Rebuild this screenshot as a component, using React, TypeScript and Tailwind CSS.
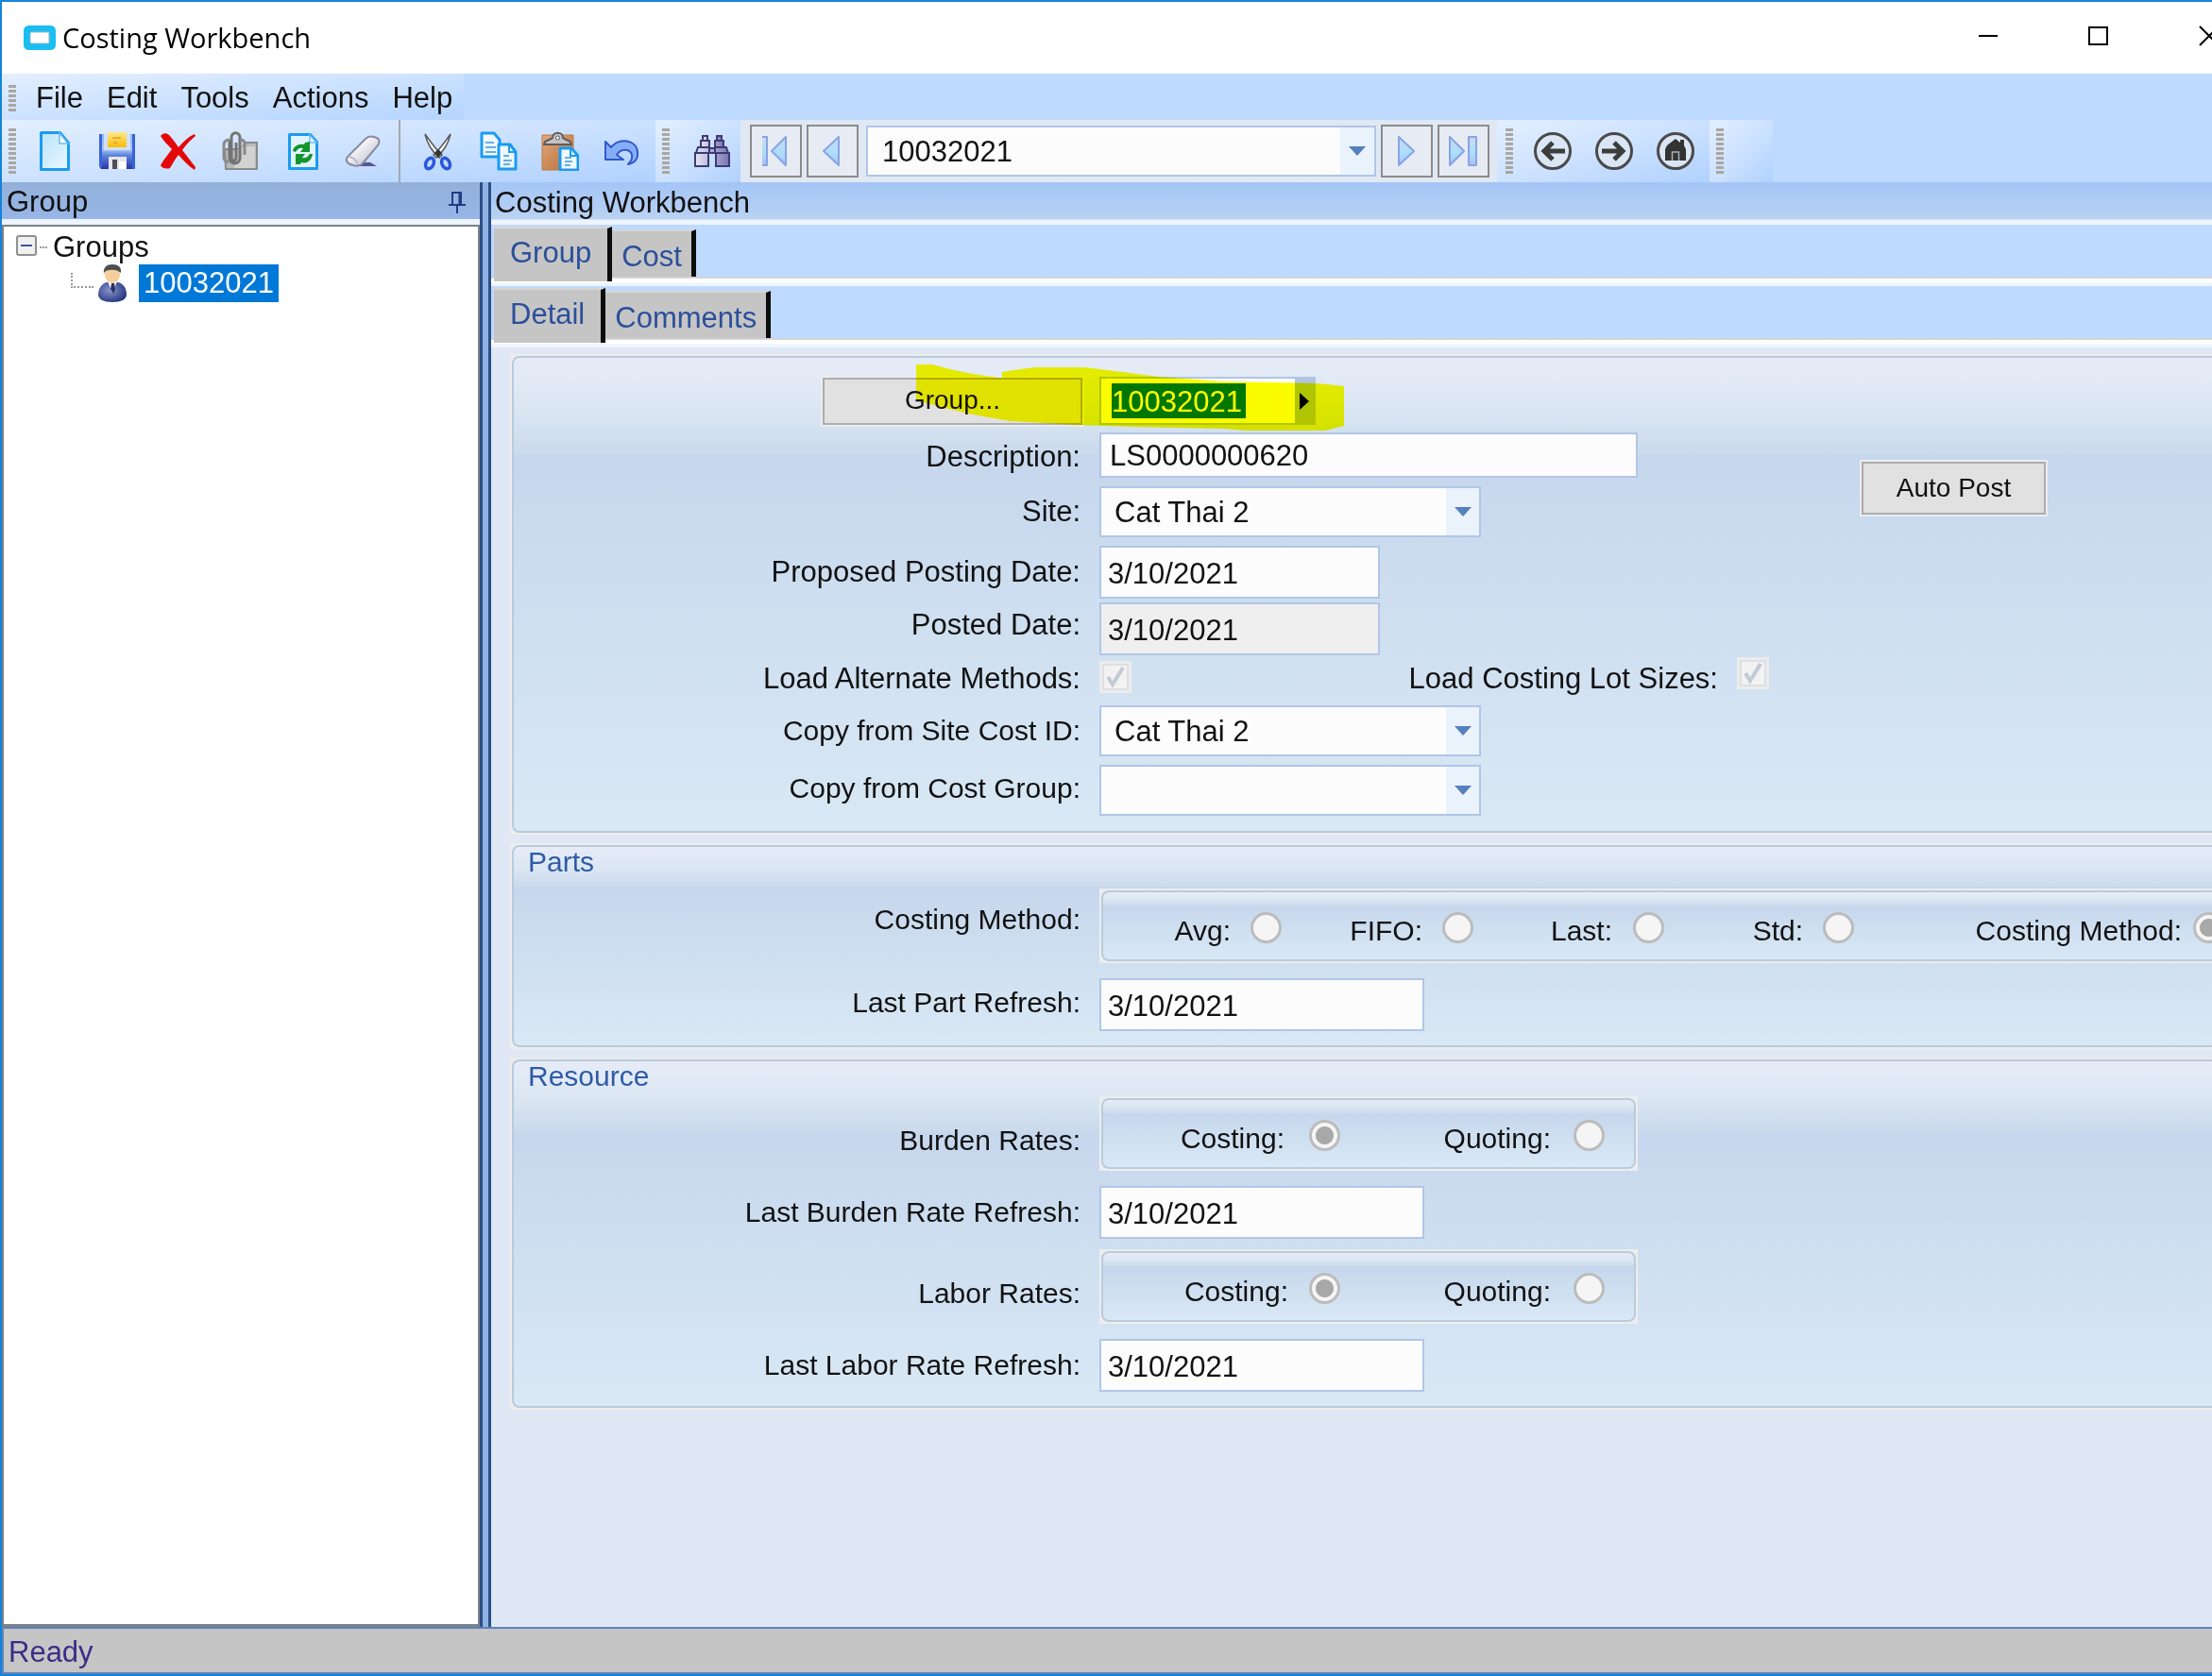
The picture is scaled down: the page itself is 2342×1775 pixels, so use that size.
import type { ReactNode } from "react";

const boxFill =
  "bg-[linear-gradient(#e6ecf7,#dce7f3_10%,#cbdaec_20%,#c6d7ee_21%,#c8d9ee_28%,#cddef0_50%,#d4e4f3_80%,#d8e8f4)]";

function Grip({ short }: { short?: boolean }) {
  return (
    <div
      className={`w-2 shrink-0 bg-[repeating-linear-gradient(#aaa6a2_0px,#aaa6a2_3px,transparent_3px,transparent_5px)] ${
        short ? "h-7" : "h-12"
      }`}
    />
  );
}

function ToolButton({ label, children }: { label: string; children: ReactNode }) {
  return (
    <button type="button" aria-label={label} className="flex h-full w-[65px] items-center justify-center">
      <svg width="40" height="42" viewBox="0 0 40 42" fill="none">
        {children}
      </svg>
    </button>
  );
}

function Toolbar({ children }: { children: ReactNode }) {
  return (
    <div className="flex h-full shrink-0 items-center bg-linear-to-br from-[#e3efff] via-[#cde2ff] to-[#b0d1ff]">
      {children}
    </div>
  );
}

function StepButton({ label, children }: { label: string; children: ReactNode }) {
  return (
    <button
      type="button"
      aria-label={label}
      className="flex h-[56px] w-[55px] items-center justify-center border-2 border-[#8b8b8b] bg-[#e7ebf3]"
    >
      <svg width="32" height="32" viewBox="0 0 32 32" fill="url(#step)" stroke="#86a5e6" strokeWidth="2" strokeLinejoin="round">
        {children}
      </svg>
    </button>
  );
}

function RoundButton({ label, children }: { label: string; children: ReactNode }) {
  return (
    <button type="button" aria-label={label} className="flex h-full w-[65px] items-center justify-center">
      <svg width="42" height="42" viewBox="0 0 42 42" fill="none">
        <circle cx="21" cy="21" r="18.5" fill="#dbe6f5" stroke="#4a4a4a" strokeWidth="3" />
        {children}
      </svg>
    </button>
  );
}

function DropArrow({ className }: { className: string }) {
  return (
    <span className={`pointer-events-none absolute inset-y-[2px] right-[2px] flex items-center justify-center bg-[#eaf2fc] ${className}`}>
      <svg width="18" height="12" viewBox="0 0 18 12">
        <path d="M0 1h18L9 11z" fill="#5580bd" />
      </svg>
    </span>
  );
}

function Select({ id, value }: { id: string; value: string }) {
  return (
    <div className="relative h-[54px] w-[404px] text-[31px]">
      <select
        id={id}
        defaultValue={value}
        className="h-full w-full appearance-none border-2 border-[#b0c6e6] bg-[#fcfcfc] pt-[2px] pl-[14px]"
      >
        <option value={value}>{value}</option>
      </select>
      <DropArrow className="w-[35px]" />
    </div>
  );
}

function DateBox({ id, size, readOnly }: { id: string; size: string; readOnly?: boolean }) {
  return (
    <input
      id={id}
      type="text"
      defaultValue="3/10/2021"
      readOnly={readOnly}
      className={`h-14 border-2 border-[#b0c6e6] pt-1 pl-[7px] text-[31px] ${size} ${readOnly ? "bg-[#efefef]" : "bg-[#fcfcfc]"}`}
    />
  );
}

function Row({
  label,
  htmlFor,
  gap,
  labelStyle = "",
  children,
}: {
  label: string;
  htmlFor?: string;
  gap: string;
  labelStyle?: string;
  children: ReactNode;
}) {
  return (
    <div className={`flex items-center gap-[20px] ${gap}`}>
      <label htmlFor={htmlFor} className={`w-[600px] shrink-0 text-right leading-8 whitespace-nowrap ${labelStyle}`}>
        {label}
      </label>
      {children}
    </div>
  );
}

function Check({ id }: { id: string }) {
  return (
    <span className="relative flex size-[34px] shrink-0 items-center justify-center bg-[#ececec]">
      <input id={id} type="checkbox" defaultChecked disabled className="size-7 appearance-none border-2 border-[#dcdfe3] bg-[#f2f2f2]" />
      <svg className="pointer-events-none absolute" width="22" height="24" viewBox="0 0 22 24" fill="none">
        <path d="M3 12l5 8L19 2" stroke="#c3c9d6" strokeWidth="4" />
      </svg>
    </span>
  );
}

function Radio({
  id,
  name,
  label,
  cell,
  gap = "gap-[21px]",
  checked,
}: {
  id: string;
  name: string;
  label: string;
  cell: string;
  gap?: string;
  checked?: boolean;
}) {
  return (
    <div className={`flex shrink-0 items-center justify-end pt-1 ${gap} ${cell}`}>
      <label htmlFor={id} className="pt-[6px] leading-8 whitespace-nowrap">
        {label}
      </label>
      <input
        id={id}
        name={name}
        type="radio"
        disabled
        defaultChecked={checked}
        className="size-[33px] shrink-0 appearance-none rounded-full border-[3px] border-[#bcbcbc] bg-[#f5f5f5] checked:bg-[radial-gradient(circle,#a8a8a8_0px,#a8a8a8_9px,#f5f5f5_10px)]"
      />
    </div>
  );
}

function RadioBox({ open, children }: { open?: boolean; children: ReactNode }) {
  return (
    <div className={`h-[79px] bg-[#ededed] py-[2px] pl-[2px] ${open ? "min-w-0 flex-1 overflow-hidden" : "w-[570px] pr-[2px]"}`}>
      <div role="radiogroup" className={`flex h-full items-center border-2 border-[#b9cbdc] ${boxFill} ${open ? "rounded-l-lg border-r-0" : "rounded-lg"}`}>
        {children}
      </div>
    </div>
  );
}

function GroupBox({ title, children }: { title?: string; children: ReactNode }) {
  return (
    <section className="bg-[#ededed] py-[2px] pl-[2px] text-[30px]">
      <div className={`rounded-l-lg border-2 border-r-0 border-[#b9cbdc] pb-[15px] ${boxFill}`}>
        {title && <h2 className="pb-[2px] pl-[15px] leading-8 text-[#2f5ba6]">{title}</h2>}
        {children}
      </div>
    </section>
  );
}

function Tab({ active, children }: { active?: boolean; children: ReactNode }) {
  return (
    <button
      type="button"
      role="tab"
      aria-selected={!!active}
      className={`border-t-2 border-r-[5px] border-t-[#d6d6d6] border-r-[#0c0c0c] bg-[#c5c5c5] leading-8 text-[#2b4f9b] ${
        active ? "h-[58px] pr-[17px] pb-1 pl-[17px]" : "mb-[5px] h-[50px] pt-[6px] pr-[10px] pl-[10px]"
      }`}
    >
      {children}
    </button>
  );
}

function TabStrip({ children }: { children: ReactNode }) {
  return (
    <div
      role="tablist"
      className="flex h-[65px] shrink-0 items-end bg-[linear-gradient(#bedaff_0px,#bedaff_55px,#cfcfcf_55px,#dcdcdc_57px,#ffffff_57px,#ffffff_61px,#edf4fe_62px)] pb-[5px] pl-[3px]"
    >
      {children}
    </div>
  );
}

export default function App() {
  return (
    <div className="flex h-screen flex-col overflow-hidden border-y-2 border-l-2 border-[#1583d9] bg-[#bedaff] font-['Liberation_Sans',Arial,sans-serif] text-[31px] text-[#111]">
      <svg width="0" height="0" className="absolute">
        <defs>
          <linearGradient id="step" x1="0" y1="0" x2="0" y2="1">
            <stop offset="0" stopColor="#cfd9f2" />
            <stop offset="0.6" stopColor="#a9defa" />
            <stop offset="1" stopColor="#b2b9f3" />
          </linearGradient>
          <linearGradient id="sheet" x1="0" y1="0" x2="1" y2="1">
            <stop offset="0" stopColor="#b9e3fb" />
            <stop offset="1" stopColor="#eaf8ff" />
          </linearGradient>
          <linearGradient id="lens" x1="0" y1="0" x2="1" y2="0">
            <stop offset="0" stopColor="#e8e8f6" />
            <stop offset="1" stopColor="#7775ae" />
          </linearGradient>
          <linearGradient id="disk" x1="0" y1="0" x2="0" y2="1">
            <stop offset="0" stopColor="#8fb4f8" />
            <stop offset="0.45" stopColor="#a9c4fa" />
            <stop offset="0.6" stopColor="#5f86dd" />
            <stop offset="1" stopColor="#2a35a8" />
          </linearGradient>
          <linearGradient id="note" x1="0" y1="0" x2="0" y2="1">
            <stop offset="0" stopColor="#fde98a" />
            <stop offset="1" stopColor="#fbbc05" />
          </linearGradient>
          <linearGradient id="wood" x1="0" y1="0" x2="1" y2="1">
            <stop offset="0" stopColor="#e2a878" />
            <stop offset="1" stopColor="#b6703c" />
          </linearGradient>
          <linearGradient id="rubber" x1="0" y1="0" x2="1" y2="1">
            <stop offset="0.3" stopColor="#fbfbfd" />
            <stop offset="1" stopColor="#b4b4c6" />
          </linearGradient>
          <radialGradient id="suit" cx="0.4" cy="0.4" r="0.7">
            <stop offset="0" stopColor="#8795cf" />
            <stop offset="1" stopColor="#1f2f78" />
          </radialGradient>
        </defs>
      </svg>

      <header className="flex h-[76px] shrink-0 items-center bg-white">
        <svg className="ml-[23px] shrink-0" width="34" height="26" viewBox="0 0 34 26" fill="none">
          <rect x="3.5" y="3.5" width="27" height="19" rx="2" stroke="#19bdf0" strokeWidth="7" />
          <rect x="7" y="7" width="20" height="12" rx="1" stroke="#8fb5c4" strokeWidth="1" />
        </svg>
        <h1 className="ml-[7px] font-['Open_Sans','Noto_Sans',sans-serif] text-[29px] text-black">Costing Workbench</h1>
        <div className="-mr-2 ml-auto flex shrink-0 gap-[95px] pb-1">
          <button type="button" aria-label="Minimize">
            <svg width="22" height="22" viewBox="0 0 22 22"><path d="M1 11h20" stroke="#000" strokeWidth="2" /></svg>
          </button>
          <button type="button" aria-label="Maximize">
            <svg width="22" height="22" viewBox="0 0 22 22"><path d="M1 2h19v18H1z" fill="none" stroke="#000" strokeWidth="2" /></svg>
          </button>
          <button type="button" aria-label="Close">
            <svg width="22" height="22" viewBox="0 0 22 22"><path d="M1 1l20 20M21 1L1 21" stroke="#000" strokeWidth="2" /></svg>
          </button>
        </div>
      </header>

      <nav className="flex h-[49px] shrink-0">
        <div className="flex items-center gap-[25px] bg-linear-to-br from-[#e3efff] to-[#b4d4ff] pt-[2px] pr-[12px] pl-[7px] leading-8">
          <div className="flex items-center gap-[21px]">
            <Grip short />
            <button type="button">File</button>
          </div>
          <button type="button">Edit</button>
          <button type="button">Tools</button>
          <button type="button">Actions</button>
          <button type="button">Help</button>
        </div>
      </nav>

      <div className="flex h-[66px] shrink-0">
        <Toolbar>
          <div className="mr-[9px] ml-[7px]"><Grip /></div>
          <ToolButton label="New">
            <path d="M4.500 1.500h20l9 11v28h-29z" fill="url(#sheet)" stroke="#1b9bf0" strokeWidth="3" strokeLinejoin="round" />
            <path d="M24 2v11h9z" fill="#fff" stroke="#6cbcf3" strokeWidth="1.500" />
          </ToolButton>
          <ToolButton label="Save">
            <path d="M1 3h38v37H3l-2-3z" fill="url(#disk)" />
            <path d="M1 3h3v35H1zM36 3h3v37h-3z" fill="#3565d8" />
            <path d="M6 3h28v17H6z" fill="#cfe0fc" />
            <path d="M10 1h20v16H10z" fill="url(#note)" />
            <path d="M15 7h9M16 12h4" stroke="#e39a2c" strokeWidth="1.500" />
            <path d="M11 27h19v13H11z" fill="#e4e6ec" />
            <path d="M15 30h5v10h-5z" fill="#4f4f5c" />
            <path d="M22 32h7v8h-7z" fill="#fff" />
          </ToolButton>
          <ToolButton label="Delete">
            <path d="M1 5c2-3 6-4 9-1 4 4 7 9 10 13 5-6 10-11 17-14l1 2c-5 4-10 9-14 15 5 6 10 13 14 18l-1 3c-6-4-12-10-17-16-4 5-6 9-9 14-3 1-8 1-10-3 3-6 8-11 12-17C9 15 4 10 1 5z" fill="#e40808" />
          </ToolButton>
          <ToolButton label="Attachment">
            <path d="M4 19h18l3-7h13v28H5z" fill="#b9b9b9" stroke="#8b8b8b" strokeWidth="2" />
            <path d="M14 21l10-5h12v23H14z" fill="#d2d2d2" />
            <path d="M9 9v19c0 8 11 8 11 0V7c0-7-9-7-9 0v21c0 4 5 4 5 0V12" stroke="#737373" strokeWidth="3" />
            <path d="M9 9C4 9 3 12 3 15v13c0 3 2 4 5 5M20 9c4 0 5 2 5 4v12" stroke="#8a8a8a" strokeWidth="3" />
          </ToolButton>
          <ToolButton label="Refresh">
            <path d="M7.500 3.500h22l7 8v28h-29z" fill="#e2f3fd" stroke="#1b9bf0" strokeWidth="3" strokeLinejoin="round" />
            <path d="M29 4v8h7z" fill="#fff" stroke="#6cbcf3" strokeWidth="1.500" />
            <path d="M11 21c1-6 7-8 12-7l1-2 5-1v11h-10l3-4c-4-1-6 1-8 4z" fill="#12962b" />
            <path d="M32 24c-1 6-5 11-12 9l-1 2h-5V24h10l-3 4c4 1 6-1 8-4z" fill="#12962b" />
          </ToolButton>
          <ToolButton label="Clear">
            <path d="M12 37h23l-7-4H16z" fill="#55559a" />
            <path d="M4 27L23 8c3-3 6-3 9-2 5 1 7 4 4 9L20 34c-3 3-7 3-10 2-6-1-9-5-6-9z" fill="url(#rubber)" stroke="#8a8aa2" strokeWidth="2" />
            <path d="M5 27c3 0 8 2 10 8" stroke="#b9b9ca" strokeWidth="2" />
          </ToolButton>
          <div className="mx-[6px] h-full w-[2px] bg-[#a3a8b0]" />
          <ToolButton label="Cut">
            <path d="M7 3c2 9 7 18 15 25l3-3C18 19 12 10 7 3zM34 3c-2 9-7 18-15 25l-3-3C23 19 29 10 34 3z" fill="#fbfbfb" stroke="#5a5a5a" strokeWidth="1.500" />
            <path d="M17 23l4-4 4 4-4 5z" fill="#333" />
            <ellipse cx="12" cy="34" rx="4" ry="6" transform="rotate(25 12 34)" stroke="#2a58dc" strokeWidth="3.500" />
            <ellipse cx="29" cy="34" rx="4" ry="6" transform="rotate(-25 29 34)" stroke="#2a58dc" strokeWidth="3.500" />
          </ToolButton>
          <ToolButton label="Copy">
            <path d="M2 2h13l6 7v18H2z" fill="#eef8fe" stroke="#1b9bf0" strokeWidth="3" strokeLinejoin="round" />
            <path d="M6 12h9M6 17h11M6 22h11" stroke="#68aee2" strokeWidth="2" />
            <path d="M20 14h12l6 8v18H20z" fill="#eef8fe" stroke="#1b9bf0" strokeWidth="3" strokeLinejoin="round" />
            <path d="M31 15v7h7" stroke="#1b9bf0" strokeWidth="2" />
            <path d="M25 26h6M25 31h9M25 35h7" stroke="#68aee2" strokeWidth="2" />
          </ToolButton>
          <ToolButton label="Paste">
            <path d="M1 4h33v37H1z" fill="url(#wood)" stroke="#bf7a44" strokeWidth="1" />
            <path d="M3 14c0-5 6-4 9-7 0-7 11-7 11 0 3 3 9 2 9 7z" fill="#c4c4c4" stroke="#5c5c5c" strokeWidth="2" />
            <circle cx="17.500" cy="7" r="2" fill="#fff" stroke="#555" />
            <path d="M20 18h12l7 8v15H20z" fill="#eef8fe" stroke="#1b9bf0" strokeWidth="3" strokeLinejoin="round" />
            <path d="M31 19v7h7" stroke="#1b9bf0" strokeWidth="2" />
            <path d="M25 28h7M25 32h8M25 36h6" stroke="#68aee2" strokeWidth="2" />
          </ToolButton>
          <ToolButton label="Undo">
            <path d="M3 11v19h19l-7-5c4-7 14-7 16 0 1 4-1 7-4 10 7-1 11-6 10-13C36 9 18 6 9 17z" fill="#86aef6" stroke="#3357cc" strokeWidth="2" strokeLinejoin="round" />
          </ToolButton>
          <div className="w-1" />
        </Toolbar>

        <Toolbar>
          <div className="ml-[7px]"><Grip /></div>
          <button type="button" aria-label="Search" className="flex h-full w-[75px] items-center justify-center pl-[14px]">
            <svg width="40" height="36" viewBox="0 0 40 36" fill="url(#lens)" stroke="#3c3a74" strokeWidth="2">
              <path d="M10 2h5v5h-5zM25 2h5v5h-5zM8 7h9v7H8zM23 7h9v7h-9z" />
              <path d="M5 14h12v6H3zM23 14h12l2 6H23zM17 15h6v5h-6zM2 20h14v14H2zM24 20h14v14H24z" />
            </svg>
          </button>
        </Toolbar>

        <div className="flex h-full items-center gap-[5px] bg-[#e0e8f4] pr-2 pl-[10px]">
          <StepButton label="First record">
            <path d="M1 1h5v30H1M26 1v30L11 16z" />
          </StepButton>
          <StepButton label="Previous record">
            <path d="M22 1v30L6 16z" />
          </StepButton>
          <div className="relative ml-[3px] h-[54px] w-[540px]">
            <select
              aria-label="Record"
              defaultValue="10032021"
              className="h-full w-full appearance-none border-2 border-[#b0c6e6] bg-[#fcfcfc] pt-[2px] pl-[15px]"
            >
              <option>10032021</option>
            </select>
            <DropArrow className="w-[36px]" />
          </div>
          <StepButton label="Next record">
            <path d="M7 1v30l16-15z" />
          </StepButton>
          <StepButton label="Last record">
            <path d="M1 1v30l15-15zM21 1h8v30h-8z" />
          </StepButton>
        </div>

        <Toolbar>
          <div className="mr-[9px] ml-[9px]"><Grip /></div>
          <RoundButton label="Back">
            <path d="M34 21H12M21 12l-9 9 9 9" stroke="#3d3d3d" strokeWidth="5" />
          </RoundButton>
          <RoundButton label="Forward">
            <path d="M8 21h22M21 12l9 9-9 9" stroke="#3d3d3d" strokeWidth="5" />
          </RoundButton>
          <RoundButton label="Home">
            <path d="M21 8l5 4V9h4v6l2 4v12H10V19l2-4z" fill="#333" />
            <path d="M17.500 31v-9h7v9" stroke="#a9b1bd" strokeWidth="1.500" />
          </RoundButton>
          <div className="w-1" />
        </Toolbar>
        <Toolbar>
          <div className="mr-[52px] ml-[7px]"><Grip /></div>
        </Toolbar>
      </div>

      <div className="flex min-h-0 flex-1">
        <aside className="flex w-[506px] shrink-0 flex-col bg-[#edf4fe]">
          <div className="flex h-[39px] shrink-0 items-center justify-between bg-linear-to-b from-[#92b0d9] to-[#97b6e8] pt-[2px] pr-[15px] pl-[5px]">
            <h2 className="leading-8">Group</h2>
            <button type="button" aria-label="Pin panel">
              <svg width="18" height="24" viewBox="0 0 18 24" fill="none" stroke="#1e3f86" strokeWidth="2">
                <path d="M4 14V2h9v12M0 15h18M9 15v9" />
                <path d="M12 2v12" strokeWidth="3" />
              </svg>
            </button>
          </div>
          <div className="mt-[6px] flex-1 border-t-2 border-r-2 border-b-[3px] border-l-2 border-[#7c8188] bg-white pt-1">
            <div className="flex h-[36px] items-center pl-[13px]">
              <button type="button" aria-label="Collapse Groups" className="-mt-1">
                <svg width="22" height="22" viewBox="0 0 22 22">
                  <rect x="1" y="1" width="20" height="20" rx="2" fill="#f0f0f0" stroke="#8f8f8f" strokeWidth="2" />
                  <path d="M5 11h12" stroke="#44549c" strokeWidth="2" />
                </svg>
              </button>
              <span className="ml-[3px] w-2 border-t-2 border-dotted border-[#9a9a9a]" />
              <span className="pl-[6px] leading-8">Groups</span>
            </div>
            <div className="flex h-10 items-center pl-[71px]">
              <span className="mb-[6px] h-4 w-6 border-b-2 border-l-2 border-dotted border-[#9a9a9a]" />
              <svg className="ml-[4px]" width="32" height="42" viewBox="0 0 32 42">
                <path d="M1 33c0-8 5-12 9-13h12c5 1 9 6 9 13 0 5-6 8-15 8S1 38 1 33z" fill="url(#suit)" />
                <path d="M11 19l5 12 5-12z" fill="#fff" />
                <path d="M15 21h3l1 6-2 5-3-5z" fill="#28305e" />
                <ellipse cx="16" cy="12" rx="8" ry="9" fill="#f2cf9d" />
                <path d="M7 11C6 4 10 1 16 1s10 3 9 9c-3-3-8-4-11-3-4 0-6 1-7 4z" fill="#4e4e4e" />
              </svg>
              <span className="ml-[12px] bg-[#0078d7] px-[5px] pt-1 pb-1 leading-8 text-white">10032021</span>
            </div>
          </div>
        </aside>
        <div className="w-[12px] shrink-0 border-x-[3px] border-[#2b4f86] bg-[#8fb1e4]" />

        <main className="flex min-w-0 flex-1 flex-col bg-[#dfe8f4]">
          <div className="flex h-[45px] shrink-0 items-start bg-[linear-gradient(#a4c5f6_0px,#b9d2f3_39px,#edf4fe_40px)] pt-[6px] pl-[4px]">
            <h2 className="leading-8">Costing Workbench</h2>
          </div>
          <TabStrip>
            <Tab active>Group</Tab>
            <Tab>Cost</Tab>
          </TabStrip>
          <TabStrip>
            <Tab active>Detail</Tab>
            <Tab>Comments</Tab>
          </TabStrip>

          <form className="mt-[7px] flex flex-col gap-[9px] pl-[20px]">
            <GroupBox>
              <div className="relative flex items-start text-[31px]">
                <div className="w-[1329px] shrink-0 pb-[1px]">
                  <div className="mt-5 flex items-center gap-[18px]">
                    <div className="w-[602px] shrink-0 text-right">
                      <button
                        type="button"
                        className="h-[50px] w-[275px] border-2 border-[#adadad] bg-[#e1e1e1] pb-[2px] text-[28px] leading-8 outline-2 outline-[#eaecef]"
                      >
                        Group...
                      </button>
                    </div>
                    <div className="flex h-[51px] w-[229px] items-center border-2 border-[#b0c6e6] bg-[#fcfcfc] pl-[11px]">
                      <input
                        type="text"
                        aria-label="Group"
                        defaultValue="10032021"
                        className="h-[37px] w-[142px] bg-[#0078d7] pt-[3px] text-white"
                      />
                      <button type="button" aria-label="Group menu" className="ml-auto flex h-full w-[20px] items-center justify-center bg-[#b0c4e0]">
                        <svg width="10" height="18" viewBox="0 0 10 18"><path d="M0 0v18l10-9z" fill="#000" /></svg>
                      </button>
                    </div>
                  </div>
                  <Row label="Description:" htmlFor="description" gap="mt-2" labelStyle="pt-1">
                    <input
                      id="description"
                      type="text"
                      defaultValue="LS0000000620"
                      className="h-12 w-[570px] border-2 border-[#b0c6e6] bg-[#fcfcfc] pt-[2px] pl-[9px]"
                    />
                  </Row>
                  <Row label="Site:" htmlFor="site" gap="mt-[9px]">
                    <Select id="site" value="Cat Thai 2" />
                  </Row>
                  <Row label="Proposed Posting Date:" htmlFor="proposed" gap="mt-[9px]">
                    <DateBox id="proposed" size="w-[297px]" />
                  </Row>
                  <Row label="Posted Date:" htmlFor="posted" gap="mt-1" labelStyle="pb-2">
                    <DateBox id="posted" size="w-[297px]" readOnly />
                  </Row>
                  <div className="mt-[5px] flex h-[35px] items-center gap-[20px]">
                    <label htmlFor="alternate" className="w-[600px] shrink-0 pt-1 text-right leading-8">
                      Load Alternate Methods:
                    </label>
                    <Check id="alternate" />
                    <div className="ml-auto flex items-center gap-[20px]">
                      <label htmlFor="lots" className="pt-1 leading-8 whitespace-nowrap">Load Costing Lot Sizes:</label>
                      <div className="pb-2"><Check id="lots" /></div>
                    </div>
                  </div>
                  <Row label="Copy from Site Cost ID:" htmlFor="copysite" gap="mt-[13px]" labelStyle="text-[30px]">
                    <Select id="copysite" value="Cat Thai 2" />
                  </Row>
                  <Row label="Copy from Cost Group:" htmlFor="copygroup" gap="mt-[9px]" labelStyle="pb-1 text-[30px]">
                    <Select id="copygroup" value="" />
                  </Row>
                </div>
                <button
                  type="button"
                  className="mt-[110px] ml-[98px] h-[56px] w-[195px] shrink-0 border-2 border-[#adadad] bg-[#e1e1e1] text-[28px] leading-8 outline-2 outline-[#eaecef]"
                >
                  Auto Post
                </button>
                {/* Marker stroke laid over the group row */}
                <svg className="pointer-events-none absolute top-[7px] left-[426px] mix-blend-multiply" width="454" height="72" viewBox="0 0 454 72">
                  <path
                    d="M0 0H17L40 6L60 10L87 14H91V8L110 5L126 3H178L195 5L257 13L324 18L375 19L424 20L453 23V65L433 70H350L325 68L230 66L170 64L100 60L60 53L30 46L15 42L0 38Z"
                    fill="#ffff00"
                  />
                </svg>
              </div>
            </GroupBox>

            <GroupBox title="Parts">
              <Row label="Costing Method:" gap="mt-[10px]" labelStyle="pb-[14px]">
                <RadioBox open>
                  <Radio id="avg" name="method" label="Avg:" cell="w-[189px]" />
                  <Radio id="fifo" name="method" label="FIFO:" cell="w-[203px]" />
                  <Radio id="last" name="method" label="Last:" cell="w-[202px]" gap="gap-[22px]" />
                  <Radio id="std" name="method" label="Std:" cell="w-[201px]" />
                  <Radio id="costing" name="method" label="Costing Method:" cell="w-[392px]" gap="gap-3" checked />
                </RadioBox>
              </Row>
              <Row label="Last Part Refresh:" htmlFor="partrefresh" gap="mt-4" labelStyle="pb-1">
                <DateBox id="partrefresh" size="w-[344px]" />
              </Row>
            </GroupBox>

            <GroupBox title="Resource">
              <Row label="Burden Rates:" gap="mt-[3px]" labelStyle="pt-[14px]">
                <RadioBox>
                  <Radio id="bcost" name="burden" label="Costing:" cell="w-[251px]" gap="gap-[26px]" checked />
                  <Radio id="bquote" name="burden" label="Quoting:" cell="w-[280px]" gap="gap-6" />
                </RadioBox>
              </Row>
              <Row label="Last Burden Rate Refresh:" htmlFor="burdenrefresh" gap="mt-4">
                <DateBox id="burdenrefresh" size="w-[344px]" />
              </Row>
              <Row label="Labor Rates:" gap="mt-[11px]" labelStyle="pt-[14px]">
                <RadioBox>
                  <Radio id="lcost" name="labor" label="Costing:" cell="w-[251px]" gap="gap-[22px]" checked />
                  <Radio id="lquote" name="labor" label="Quoting:" cell="w-[280px]" gap="gap-6" />
                </RadioBox>
              </Row>
              <Row label="Last Labor Rate Refresh:" htmlFor="laborrefresh" gap="mt-4">
                <DateBox id="laborrefresh" size="w-[344px]" />
              </Row>
            </GroupBox>
          </form>
        </main>
      </div>

      <footer className="flex h-[50px] shrink-0 items-center border-y-2 border-l-2 border-[#5d83bd] bg-[#c5c5c5] pt-1 pl-[5px] leading-8 text-[#3a2d86]">
        Ready
      </footer>
    </div>
  );
}
